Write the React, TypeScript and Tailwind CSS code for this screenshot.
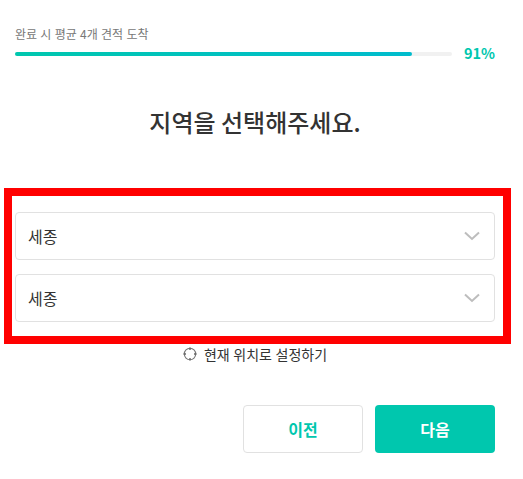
const font = { fontFamily: '"Noto Sans CJK KR", "Noto Sans", sans-serif' };

function Select({ label }: { label: string }) {
  return (
    <div className="flex h-12 items-center justify-between rounded-[4px] border border-[#e1e1e1] bg-white pl-3 pr-[14px]">
      <span className="text-base leading-none text-[#333333]">{label}</span>
      <svg width="16" height="10" viewBox="0 0 16 10" fill="none" className="mt-[-1px]">
        <path d="M1 1.5L8 8L15 1.5" stroke="#bdbdbd" strokeWidth="2" />
      </svg>
    </div>
  );
}

export default function App() {
  return (
    <div className="flex h-[479px] w-[523px] flex-col bg-white" style={font}>
      <div className="flex flex-col pl-[15px] pr-[28px] pt-[27px]">
        <div className="h-[14px] text-xs leading-[14px] text-[#777777] [word-spacing:0.6px]">완료 시 평균 4개 견적 도착</div>
        <div className="mt-[6px] flex h-[26px] items-start">
          <div className="mt-[5px] h-1 w-[437px] rounded-full bg-[#f1f1f1]">
            <div className="h-1 w-[397px] rounded-full bg-gradient-to-r from-[#00c7ae] to-[#00bccd]" />
          </div>
          <span className="ml-[12px] mt-[-2px] text-[14.5px] font-semibold leading-[16px] text-[#00c7ae]">91%</span>
        </div>
      </div>
      <h1 className="mt-[32px] pr-[13px] text-center text-2xl font-medium leading-[34px] text-[#333333]">
        지역을 선택해주세요.
      </h1>
      <div className="ml-1 mt-[49px] flex h-[156px] w-[507px] flex-col gap-[14px] border-8 border-[#ff0000] pl-[3px] pr-[8px] pt-4">
        <Select label="세종" />
        <Select label="세종" />
      </div>
      <div className="mt-[1px] flex h-[18px] items-center justify-center gap-[7px] pr-[13px]">
        <svg width="14" height="14" viewBox="0 0 14 14" fill="none">
          <circle cx="7" cy="7" r="5.7" stroke="#777777" strokeWidth="1.1" />
          <path d="M7 0.5V3M7 11V13.5M0.5 7H3M11 7H13.5" stroke="#666666" strokeWidth="1.4" />
        </svg>
        <span className="text-sm leading-none text-[#333333] [word-spacing:0.5px]">현재 위치로 설정하기</span>
      </div>
      <div className="mt-[42px] flex justify-end gap-3 pr-[28px]">
        <button className="flex h-12 w-[120px] items-center justify-center rounded-[4px] border border-[#e1e1e1] bg-white text-base font-bold text-[#00c7ae]">
          이전
        </button>
        <button className="flex h-12 w-[120px] items-center justify-center rounded-[4px] bg-[#00c7ae] text-base font-bold text-white">
          다음
        </button>
      </div>
    </div>
  );
}
